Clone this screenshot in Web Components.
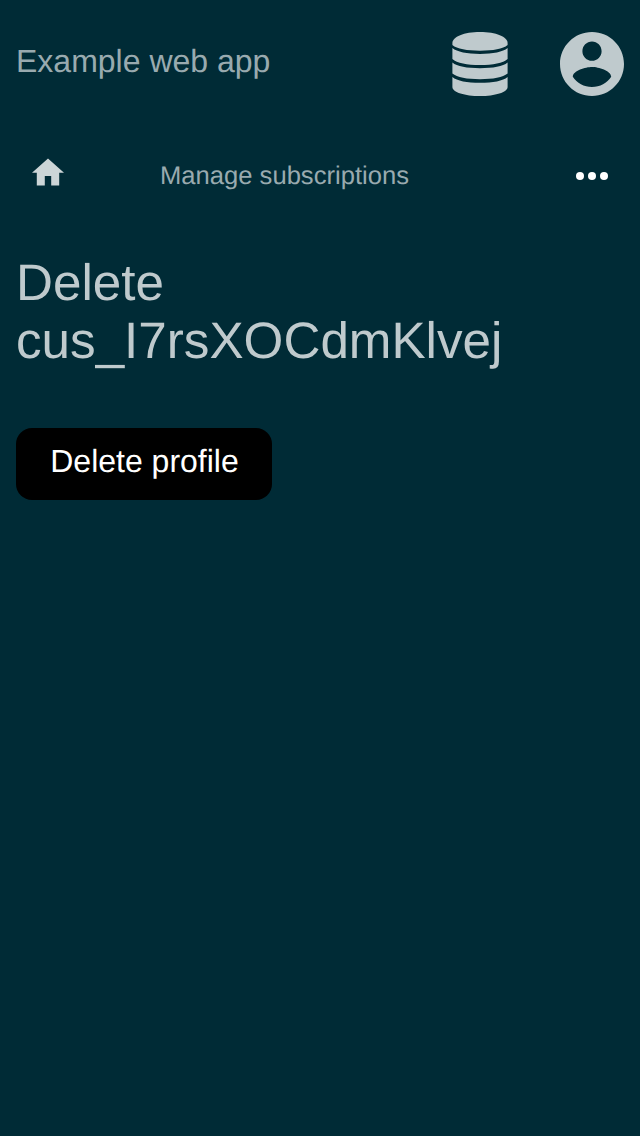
<!DOCTYPE html>
<html lang="en">
<head>
<meta charset="utf-8">
<title>Example web app</title>
<style>
html, body { margin: 0; min-height: 100%; background: #002b36; }
body { font-family: "Liberation Sans", Arial, sans-serif; color: #bfcacd; text-rendering: geometricPrecision; }
</style>
</head>
<body>
<app-shell>
  <app-header slot="header">Example web app</app-header>
  <app-nav slot="nav">Manage subscriptions</app-nav>
  <page-title>Delete cus_I7rsXOCdmKlvej</page-title>
  <action-button>Delete profile</action-button>
</app-shell>
<script>
const define = (name, html) => customElements.define(name, class extends HTMLElement {
  constructor() {
    super();
    const template = document.createElement('template');
    template.innerHTML = html;
    this.attachShadow({ mode: 'open' }).append(template.content.cloneNode(true));
  }
});

const icons = {
  database: ['0 0 56 64', 56, 64, '<path d="M.4 11C.4 4.800 12 0 28 0s27.600 4.800 27.600 11v2C51 17 41 18.700 28 18.700S5 17 .4 13z"/><path d="M.4 16C5 20 15 21.900 28 21.900s23-1.900 27.600-5.900v11C51 31 41 33 28 33S5 31 .4 27z"/><path d="M.4 30.600C5 34.600 15 36.300 28 36.300s23-1.700 27.600-5.700v10.900C51 45.300 41 47.200 28 47.200S5 45.300 .4 41.500z"/><path d="M.4 44.900C5 48.900 15 50.700 28 50.700s23-1.800 27.600-5.800v10C55.600 60.200 43 64 28 64S.4 60.200.4 54.900z"/>'],
  account: ['2 2 20 20', 64, 64, '<path fill-rule="evenodd" d="M12 2C6.480 2 2 6.480 2 12s4.480 10 10 10 10-4.480 10-10S17.520 2 12 2zm0 3c1.660 0 3 1.340 3 3s-1.340 3-3 3-3-1.340-3-3 1.340-3 3-3zm0 14.200c-2.500 0-4.710-1.280-6-3.220.03-1.990 4-3.080 6-3.080 1.990 0 5.970 1.090 6 3.080-1.290 1.940-3.500 3.220-6 3.220z"/>'],
  home: ['2 2.750 20 17.500', 32, 28, '<path d="M10 20v-6h4v6h5v-8h3L12 3 2 12h3v8z"/>'],
  more: ['0 0 32 8', 32, 8, '<circle cx="4" cy="4" r="4"/><circle cx="16" cy="4" r="4"/><circle cx="28" cy="4" r="4"/>']
};
customElements.define('app-icon', class extends HTMLElement {
  connectedCallback() {
    const [box, w, h, shape] = icons[this.getAttribute('name')];
    this.attachShadow({ mode: 'open' }).innerHTML =
      `<style>:host{display:block;flex:none}svg{display:block;fill:currentColor}</style><svg viewBox="${box}" width="${w}" height="${h}">${shape}</svg>`;
  }
});

define('app-header', `<style>
:host { display: flex; height: 128px; box-sizing: border-box; padding: 32px 16px; align-items: flex-start; }
.name { flex: 1; font-size: 32px; line-height: 58px; color: #99aaaf; }
.icons { display: flex; gap: 52px; }
</style><div class="name"><slot></slot></div><div class="icons"><app-icon name="database"></app-icon><app-icon name="account"></app-icon></div>`);

define('app-nav', `<style>
:host { display: flex; height: 96px; box-sizing: border-box; padding: 0 32px; align-items: flex-start; }
.home { padding-top: 30px; color: #ccd5d7; }
.label { flex: 1; padding-left: 96px; font-size: 25.6px; line-height: 96px; color: #99aaaf; }
.more { padding-top: 44px; color: #fff; }
</style><app-icon class="home" name="home"></app-icon><div class="label"><slot></slot></div><app-icon class="more" name="more"></app-icon>`);

define('page-title', `<style>
:host { display: block; }
h1 { margin: 0; width: 520px; font-size: 51.2px; font-weight: 400; line-height: 58px; }
</style><h1><slot></slot></h1>`);

define('action-button', `<style>
:host { display: block; margin-top: 58px; }
button { display: block; width: 256px; height: 72px; box-sizing: border-box; border: 0; border-radius: 16px; margin: 0; padding: 0 0 6px 1px; background: #000; color: #fff; font: 32px/36px "Liberation Sans", Arial, sans-serif; text-rendering: geometricPrecision; }
</style><button type="button"><slot></slot></button>`);

define('app-shell', `<style>
:host { display: flex; flex-direction: column; min-height: 1136px; background: #002b36; }
main { padding: 30px 16px; }
</style><slot name="header"></slot><slot name="nav"></slot><main><slot></slot></main>`);
</script>
</body>
</html>
